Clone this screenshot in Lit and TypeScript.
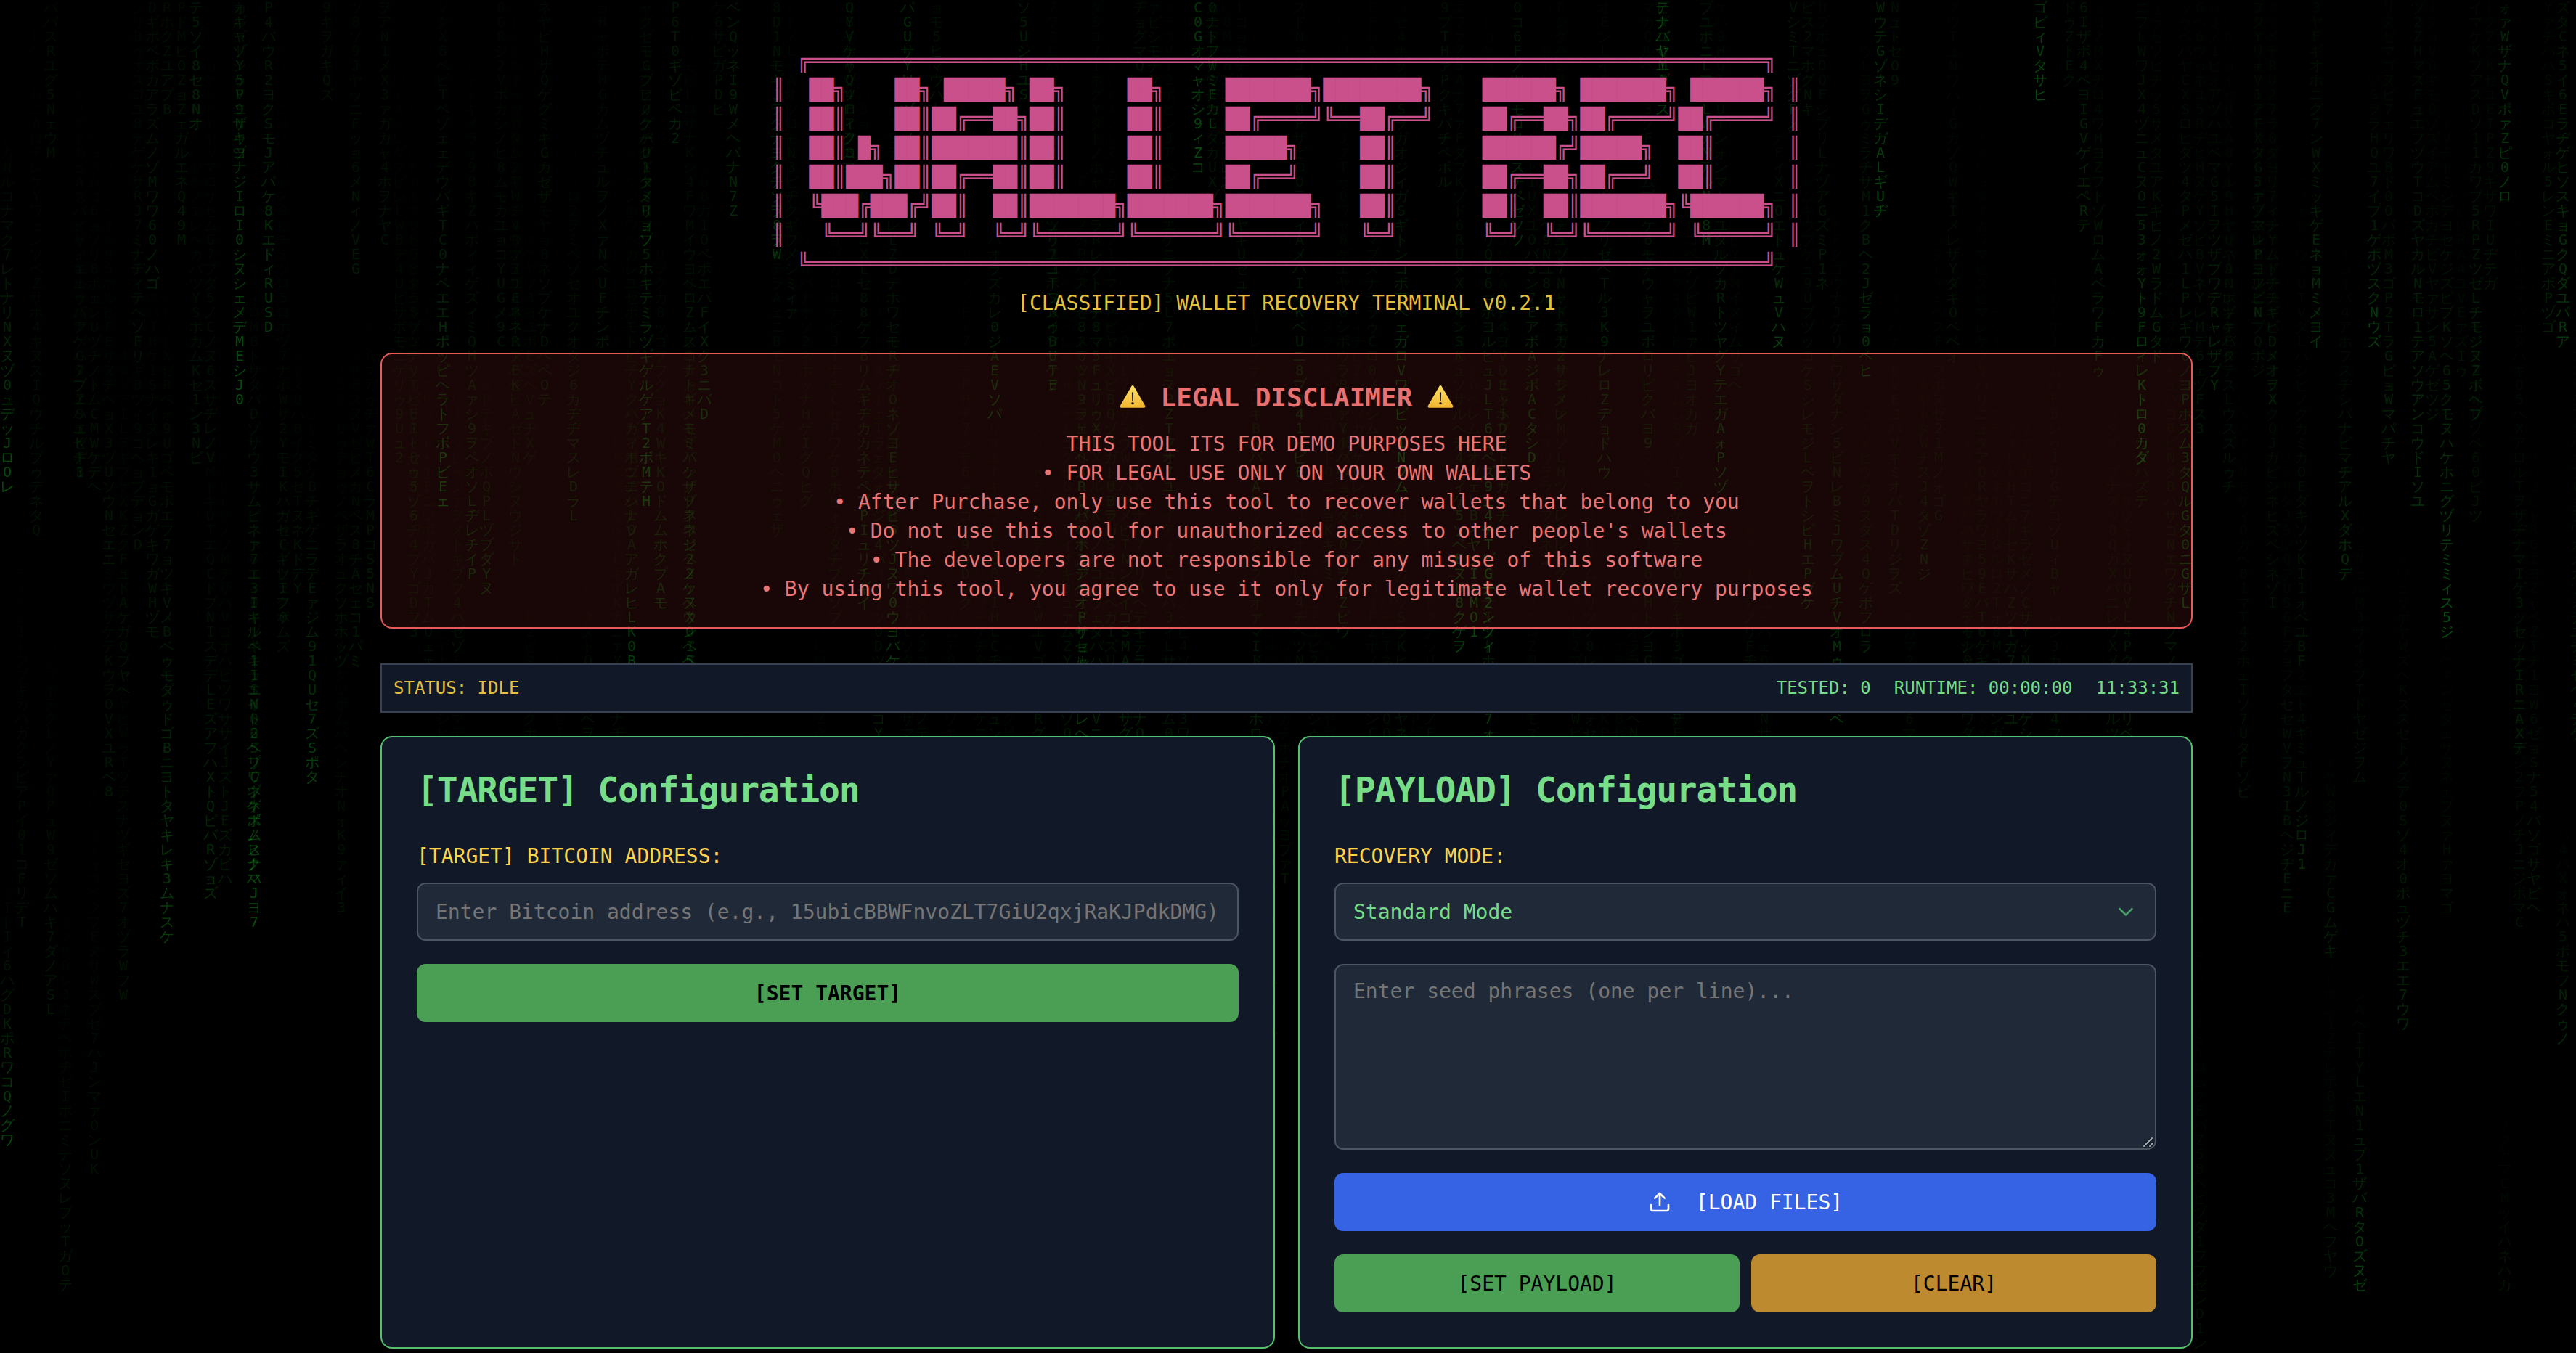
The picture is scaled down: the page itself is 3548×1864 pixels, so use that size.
import { LitElement, html, css } from "lit";
import { customElement } from "lit/decorators.js";

const GLYPHS = "アイウエオカキクケコサシスセソタチツテトナニヌネノハヒフヘホマミムメモヤユヨラリルレロワヲンガギグゲゴザジズゼゾダヂヅデドバビブベボパピプペポァィゥェォャュョッ0123456789ABCDEFGHIJKLMNOPQRSTUVWXYZ";

function rng(seed: number) {
  let s = seed >>> 0;
  return () => {
    s = (s + 0x6d2b79f5) >>> 0;
    let t = s;
    t = Math.imul(t ^ (t >>> 15), t | 1);
    t ^= t + Math.imul(t ^ (t >>> 7), t | 61);
    return ((t ^ (t >>> 14)) >>> 0) / 4294967296;
  };
}

interface Trail { x: number; y: number; text: string; alpha: number; }

function buildTrails(): Trail[] {
  const r = rng(20240611);
  const out: Trail[] = [];
  for (let c = 0; c < 178; c++) {
    const n = 1 + Math.floor(r() * 1.9);
    for (let k = 0; k < n; k++) {
      const len = 16 + Math.floor(r() * 34);
      const late = r() < 0.12;
      const head = late ? 60 + Math.floor(r() * 34) : 6 + Math.floor(r() * 60);
      const start = head - len;
      let text = "";
      for (let i = 0; i < len; i++) text += (i ? "\n" : "") + GLYPHS[Math.floor(r() * GLYPHS.length)];
      const p = r();
      out.push({ x: c * 20, y: start * 20, text, alpha: 0.1 + p * p * p * 0.36 });
    }
  }
  return out;
}

const TRAILS = buildTrails();

const ART = [
  "  ╔══════════════════════════════════════════════════════════════════════════════╗",
  "║  ██╗    ██╗ █████╗ ██╗     ██╗     ███████╗████████╗    ██████╗ ███████╗ ██████╗ ║",
  "║  ██║    ██║██╔══██╗██║     ██║     ██╔════╝╚══██╔══╝    ██╔══██╗██╔════╝██╔════╝ ║",
  "║  ██║ █╗ ██║███████║██║     ██║     █████╗     ██║       ██████╔╝█████╗  ██║      ║",
  "║  ██║███╗██║██╔══██║██║     ██║     ██╔══╝     ██║       ██╔══██╗██╔══╝  ██║      ║",
  "║  ╚███╔███╔╝██║  ██║███████╗███████╗███████╗   ██║       ██║  ██║███████╗╚██████╗ ║",
  "║   ╚══╝╚══╝ ╚═╝  ╚═╝╚══════╝╚══════╝╚══════╝   ╚═╝       ╚═╝  ╚═╝╚══════╝ ╚═════╝ ║",
  "  ╚══════════════════════════════════════════════════════════════════════════════╝",
].join("\n");

const warnIcon = html`<svg class="warn" viewBox="0 0 36 36" aria-hidden="true">
  <defs><linearGradient id="wg" x1="0" y1="0" x2="0" y2="1"><stop offset="0" stop-color="#fbe26a"/><stop offset="1" stop-color="#f2b52e"/></linearGradient></defs>
  <path d="M18 1 Q19 1 19.7 2.2 L35.2 29 Q36 31.5 33.6 31.8 L2.4 31.8 Q0 31.5 .8 29 L16.3 2.2 Q17 1 18 1 Z" fill="url(#wg)"/>
  <path d="M16.9 10.5 h2.2 l-.35 11.5 h-1.5 Z" fill="#17110a"/>
  <circle cx="18" cy="25.6" r="1.7" fill="#17110a"/>
</svg>`;

@customElement("app-root")
export class AppRoot extends LitElement {
  static styles = css`
    :host { display: block; position: relative; box-sizing: border-box; min-height: 1864px; padding-right: 4px; background: #000; overflow: hidden;
      font-family: "DejaVu Sans Mono", monospace; }
    .rain { position: absolute; inset: 0; overflow: hidden; pointer-events: none; filter: blur(0.5px); }
    .trail { position: absolute; width: 20px; text-align: center; white-space: pre; font-size: 20px; line-height: 20px;
      color: #11b521; -webkit-mask-image: linear-gradient(to bottom, transparent 0%, rgba(0,0,0,.4) 55%, #000 100%);
      mask-image: linear-gradient(to bottom, transparent 0%, rgba(0,0,0,.4) 55%, #000 100%); }
    .page { position: relative; box-sizing: border-box; width: 2496px; margin: 0 auto; padding-top: 64px; display: flex; flex-direction: column; }
    .art { margin: 0; align-self: center; font: inherit; font-size: 28px; line-height: 40px; color: #c9508a; text-align: left; white-space: pre; }
    .subtitle { margin-top: 14px; font-size: 28px; line-height: 40px; color: #e5c040; text-align: center; }
    .disclaimer { margin-top: 48px; box-sizing: border-box; padding: 32px; border: 2px solid #e85a5a; border-radius: 16px;
      background: rgba(127, 29, 29, 0.2); text-align: center; }
    .disclaimer h2 { margin: 0 0 16px; display: flex; justify-content: center; align-items: center; gap: 21px; font-size: 36px; line-height: 56px; font-weight: 700; color: #e87272; }
    .warn { width: 36px; height: 36px; flex: none; }
    .disclaimer p { margin: 0; font-size: 28px; line-height: 40px; color: #ea7777; }
    .status { margin-top: 48px; box-sizing: border-box; padding: 16px; display: flex; justify-content: space-between; border: 2px solid #374151;
      background: #111827; font-size: 24px; line-height: 32px; color: #e5c040; }
    .status .right { display: flex; gap: 32px; color: #76dc88; }
    .grid { margin-top: 32px; display: grid; grid-template-columns: 1fr 1fr; gap: 32px; }
    .card { box-sizing: border-box; min-height: 844px; padding: 48px; border: 2px solid #55c06c; border-radius: 16px; background: #111827; display: flex; flex-direction: column; gap: 32px; }
    .card h3 { margin: 0 0 16px; font-size: 48px; line-height: 48px; letter-spacing: -1.2px; font-weight: 700; color: #78dd88; }
    .field { display: flex; flex-direction: column; gap: 16px; }
    label { font-size: 28px; line-height: 40px; color: #fcd34d; }
    input, select, textarea { box-sizing: border-box; width: 100%; font: inherit; font-size: 28px; border: 2px solid #4b5563; border-radius: 12px; background: #1f2937; color: #76dc88; outline: none; }
    input { height: 80px; padding: 0 24px; }
    input::placeholder, textarea::placeholder { color: #757575; opacity: 1; }
    .select-wrap, .area-wrap { position: relative; }
    select { height: 80px; padding: 0 24px; appearance: none; -webkit-appearance: none; }
    .chev { position: absolute; right: 30px; top: 28px; width: 24px; height: 24px; pointer-events: none; }
    textarea { display: block; height: 256px; padding: 16px 24px; line-height: 40px; resize: none; }
    .grip { position: absolute; right: 2px; bottom: 2px; width: 20px; height: 20px; pointer-events: none; }
    button { box-sizing: border-box; height: 80px; border: 0; border-radius: 12px; font: inherit; font-size: 28px; color: #000; display: flex; align-items: center; justify-content: center; }
    .green { background: #4b9f55; }
    .bold { font-weight: 700; }
    .blue { background: #3563e3; color: #fff; gap: 34px; }
    .amber { background: #bd8a30; }
    .up { width: 32px; height: 32px; }
    .pair { display: grid; grid-template-columns: 1fr 1fr; gap: 16px; }
  `;

  render() {
    return html`
      <div class="rain" aria-hidden="true">
        ${TRAILS.map((t) => html`<div class="trail" style="left:${t.x}px;top:${t.y}px;opacity:${t.alpha.toFixed(2)}">${t.text}</div>`)}
      </div>
      <div class="page">
        <pre class="art">${ART}</pre>
        <div class="subtitle">[CLASSIFIED] WALLET RECOVERY TERMINAL v0.2.1</div>
        <section class="disclaimer">
          <h2>${warnIcon}<span>LEGAL DISCLAIMER</span>${warnIcon}</h2>
          <p>THIS TOOL ITS FOR DEMO PURPOSES HERE</p>
          <p>• FOR LEGAL USE ONLY ON YOUR OWN WALLETS</p>
          <p>• After Purchase, only use this tool to recover wallets that belong to you</p>
          <p>• Do not use this tool for unauthorized access to other people's wallets</p>
          <p>• The developers are not responsible for any misuse of this software</p>
          <p>• By using this tool, you agree to use it only for legitimate wallet recovery purposes</p>
        </section>
        <div class="status">
          <span>STATUS: IDLE</span>
          <div class="right"><span>TESTED: 0</span><span>RUNTIME: 00:00:00</span><span>11:33:31</span></div>
        </div>
        <div class="grid">
          <section class="card">
            <h3>[TARGET] Configuration</h3>
            <div class="field">
              <label>[TARGET] BITCOIN ADDRESS:</label>
              <input placeholder="Enter Bitcoin address (e.g., 15ubicBBWFnvoZLT7GiU2qxjRaKJPdkDMG)" />
            </div>
            <button class="green bold">[SET TARGET]</button>
          </section>
          <section class="card">
            <h3>[PAYLOAD] Configuration</h3>
            <div class="field">
              <label>RECOVERY MODE:</label>
              <div class="select-wrap">
                <select><option>Standard Mode</option></select>
                <svg class="chev" viewBox="0 0 24 24" fill="none" stroke="#4a9e68" stroke-width="2.5" stroke-linecap="round" stroke-linejoin="round"><path d="M3.5 8l8.5 8.5 8.5-8.5"/></svg>
              </div>
            </div>
            <div class="area-wrap">
              <textarea placeholder="Enter seed phrases (one per line)..."></textarea>
              <svg class="grip" viewBox="0 0 20 20" fill="none" stroke-linecap="round"><path d="M5 17L16 6M13 17l4-4" stroke="#0e1420" stroke-width="4"/><path d="M5 17L16 6M13 17l4-4" stroke="#a8adb5" stroke-width="2"/></svg>
            </div>
            <button class="blue">
              <svg class="up" viewBox="0 0 24 24" fill="none" stroke="#fff" stroke-width="2" stroke-linecap="round" stroke-linejoin="round"><path d="M21 15v4a2 2 0 0 1-2 2H5a2 2 0 0 1-2-2v-4"/><path d="M17 8l-5-5-5 5"/><path d="M12 3v12"/></svg>
              <span>[LOAD FILES]</span>
            </button>
            <div class="pair">
              <button class="green">[SET PAYLOAD]</button>
              <button class="amber">[CLEAR]</button>
            </div>
          </section>
        </div>
      </div>
    `;
  }
}
